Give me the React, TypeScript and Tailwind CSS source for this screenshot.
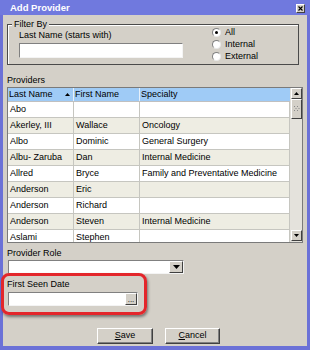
import React from "react";

const rows: [string, string, string][] = [
  ["Abo", "", ""],
  ["Akerley, III", "Wallace", "Oncology"],
  ["Albo", "Dominic", "General Surgery"],
  ["Albu- Zaruba", "Dan", "Internal Medicine"],
  ["Allred", "Bryce", "Family and Preventative Medicine"],
  ["Anderson", "Eric", ""],
  ["Anderson", "Richard", ""],
  ["Anderson", "Steven", "Internal Medicine"],
  ["Aslami", "Stephen", ""],
];

function Radio({ checked, label }: { checked?: boolean; label: string }) {
  return (
    <div className="flex items-center h-[12px] gap-[4px]">
      <div className="w-[9px] h-[9px] rounded-full bg-white border border-t-[#808080] border-l-[#808080] border-b-[#e8e8e8] border-r-[#e8e8e8] flex items-center justify-center">
        {checked && <div className="w-[3px] h-[3px] rounded-full bg-black" />}
      </div>
      <span className="leading-[12px]">{label}</span>
    </div>
  );
}

function ArrowBtn({ dir }: { dir: "up" | "down" }) {
  return (
    <div className="w-[11px] h-[11px] bg-[#d4d0c8] border border-t-white border-l-white border-b-[#404040] border-r-[#404040] flex items-center justify-center">
      <svg width="5" height="3" viewBox="0 0 5 3">
        {dir === "up" ? <polygon points="2.5,0 5,3 0,3" fill="#000" /> : <polygon points="0,0 5,0 2.5,3" fill="#000" />}
      </svg>
    </div>
  );
}

export default function App() {
  return (
    <div
      className="w-[310px] h-[350px] bg-[#6b71d7] flex flex-col text-[9px] text-black"
      style={{ fontFamily: "'Liberation Sans', Arial, sans-serif" }}
    >
      {/* Title bar */}
      <div className="h-[15px] flex items-center justify-between pl-[10px] pr-[5px] bg-[#7079de]">
        <span className="text-white font-bold text-[9.5px] leading-[12px]">Add Provider</span>
        <div className="w-[9px] h-[9px] bg-[#d4d0c8] border border-t-white border-l-white border-b-[#404040] border-r-[#404040] flex items-center justify-center mt-[1px]">
          <svg width="5" height="5" viewBox="0 0 5 5">
            <path d="M0.5 0.5 L4.5 4.5 M4.5 0.5 L0.5 4.5" stroke="#000" strokeWidth="1.1" />
          </svg>
        </div>
      </div>

      {/* Body */}
      <div className="flex-1 mx-[3px] mb-[4px] bg-[#d4d0c8] relative flex flex-col px-[4px]">
        {/* Filter By group */}
        <div className="relative mt-[9px] w-[292px] h-[41px] border border-[#4a4a4a] shadow-[inset_1px_1px_0_#ffffff] pt-[1px] pl-[11px] flex">
          <span className="absolute -top-[6px] left-[4px] px-[2px] bg-[#d4d0c8] leading-[11px]">Filter By</span>
          <div className="w-[164px] flex flex-col">
            <span className="mt-[4px] leading-[11px]">Last Name (starts with)</span>
            <div className="mt-[2px] h-[15px] bg-white border border-t-[#808080] border-l-[#808080] border-b-[#f4f4f4] border-r-[#f4f4f4]" />
          </div>
          <div className="ml-[29px] flex flex-col">
            <Radio checked label="All" />
            <Radio label="Internal" />
            <Radio label="External" />
          </div>
        </div>

        {/* Providers */}
        <span className="mt-[10px] leading-[11px]">Providers</span>
        <div className="mt-[1px] w-[296px] h-[156px] border border-[#7a7a7a] flex bg-white overflow-hidden">
          <div className="w-[282px] flex flex-col">
            <div className="h-[14px] flex bg-[#9fcbf6] border-b border-[#c0c0c0] shrink-0">
              <div className="w-[66px] border-r border-[#e6f0fa] pl-[1px] flex items-center justify-between pr-[3px]">
                <span className="leading-[13px]">Last Name</span>
                <svg width="5" height="3" viewBox="0 0 5 3">
                  <polygon points="2.5,0 5,3 0,3" fill="#000" />
                </svg>
              </div>
              <div className="w-[66px] border-r border-[#e6f0fa] pl-[1px] flex items-center">
                <span className="leading-[13px]">First Name</span>
              </div>
              <div className="flex-1 pl-[1px] flex items-center">
                <span className="leading-[13px]">Specialty</span>
              </div>
            </div>
            {rows.map((r, i) => (
              <div
                key={i}
                className={`h-[16px] shrink-0 flex border-b border-[#c6c6c0] ${i % 2 === 1 ? "bg-[#eeede3]" : "bg-white"}`}
              >
                <div className="w-[66px] border-r border-[#c6c6c0] pl-[2px] flex items-center whitespace-nowrap overflow-hidden">{r[0]}</div>
                <div className="w-[66px] border-r border-[#c6c6c0] pl-[2px] flex items-center whitespace-nowrap overflow-hidden">{r[1]}</div>
                <div className="flex-1 border-r border-[#c6c6c0] pl-[2px] flex items-center whitespace-nowrap overflow-hidden">{r[2]}</div>
              </div>
            ))}
          </div>
          {/* Scrollbar */}
          <div className="w-[12px] bg-[#e4e2dc] flex flex-col items-end justify-between">
            <div className="flex flex-col">
              <ArrowBtn dir="up" />
              <div className="w-[11px] h-[20px] bg-[#d4d0c8] border border-t-white border-l-white border-b-[#404040] border-r-[#404040] flex items-center justify-center">
                <svg width="6" height="6" viewBox="0 0 6 6">
                  <g fill="#8a8a8a">
                    <rect x="0" y="0" width="1" height="1" />
                    <rect x="3" y="0" width="1" height="1" />
                    <rect x="1.5" y="2" width="1" height="1" />
                    <rect x="4.5" y="2" width="1" height="1" />
                    <rect x="0" y="4" width="1" height="1" />
                    <rect x="3" y="4" width="1" height="1" />
                  </g>
                </svg>
              </div>
            </div>
            <div className="mb-[1px]">
              <ArrowBtn dir="down" />
            </div>
          </div>
        </div>

        {/* Provider Role */}
        <span className="mt-[5px] leading-[11px]">Provider Role</span>
        <div className="mt-[1px] ml-[1px] w-[176px] h-[14px] bg-white border border-t-[#808080] border-l-[#808080] border-b-[#f4f4f4] border-r-[#f4f4f4] flex justify-end">
          <div className="w-[14px] h-full bg-[#d4d0c8] border border-t-white border-l-white border-b-[#404040] border-r-[#404040] flex items-center justify-center">
            <svg width="7" height="4" viewBox="0 0 7 4">
              <polygon points="0,0 7,0 3.5,4" fill="#000" />
            </svg>
          </div>
        </div>

        {/* First Seen Date */}
        <span className="mt-[5px] leading-[11px]">First Seen Date</span>
        <div className="mt-[2px] ml-[1px] w-[130px] h-[14px] bg-white border border-t-[#808080] border-l-[#808080] border-b-[#f4f4f4] border-r-[#f4f4f4] flex justify-end">
          <div className="w-[12px] h-full bg-[#d4d0c8] border border-t-white border-l-white border-b-[#404040] border-r-[#404040] flex items-end justify-center leading-[8px] text-[8px]">
            ...
          </div>
        </div>

        {/* Buttons */}
        <div className="mt-[22px] ml-[90px] flex gap-[12px]">
          <div className="w-[56px] h-[16px] bg-[#d4d0c8] border border-t-white border-l-white border-b-[#404040] border-r-[#404040] shadow-[inset_-1px_-1px_0_#808080] flex items-center justify-center">
            <span><u>S</u>ave</span>
          </div>
          <div className="w-[55px] h-[16px] bg-[#d4d0c8] border border-t-white border-l-white border-b-[#404040] border-r-[#404040] shadow-[inset_-1px_-1px_0_#808080] flex items-center justify-center">
            <span><u>C</u>ancel</span>
          </div>
        </div>

        {/* Red highlight annotation */}
        <div className="absolute left-[-2px] top-[258px] w-[146px] h-[42px] rounded-[8px] border-[3px] border-[#e3262b] shadow-[1px_2px_3px_rgba(0,0,0,0.45)] pointer-events-none" />
      </div>
    </div>
  );
}
